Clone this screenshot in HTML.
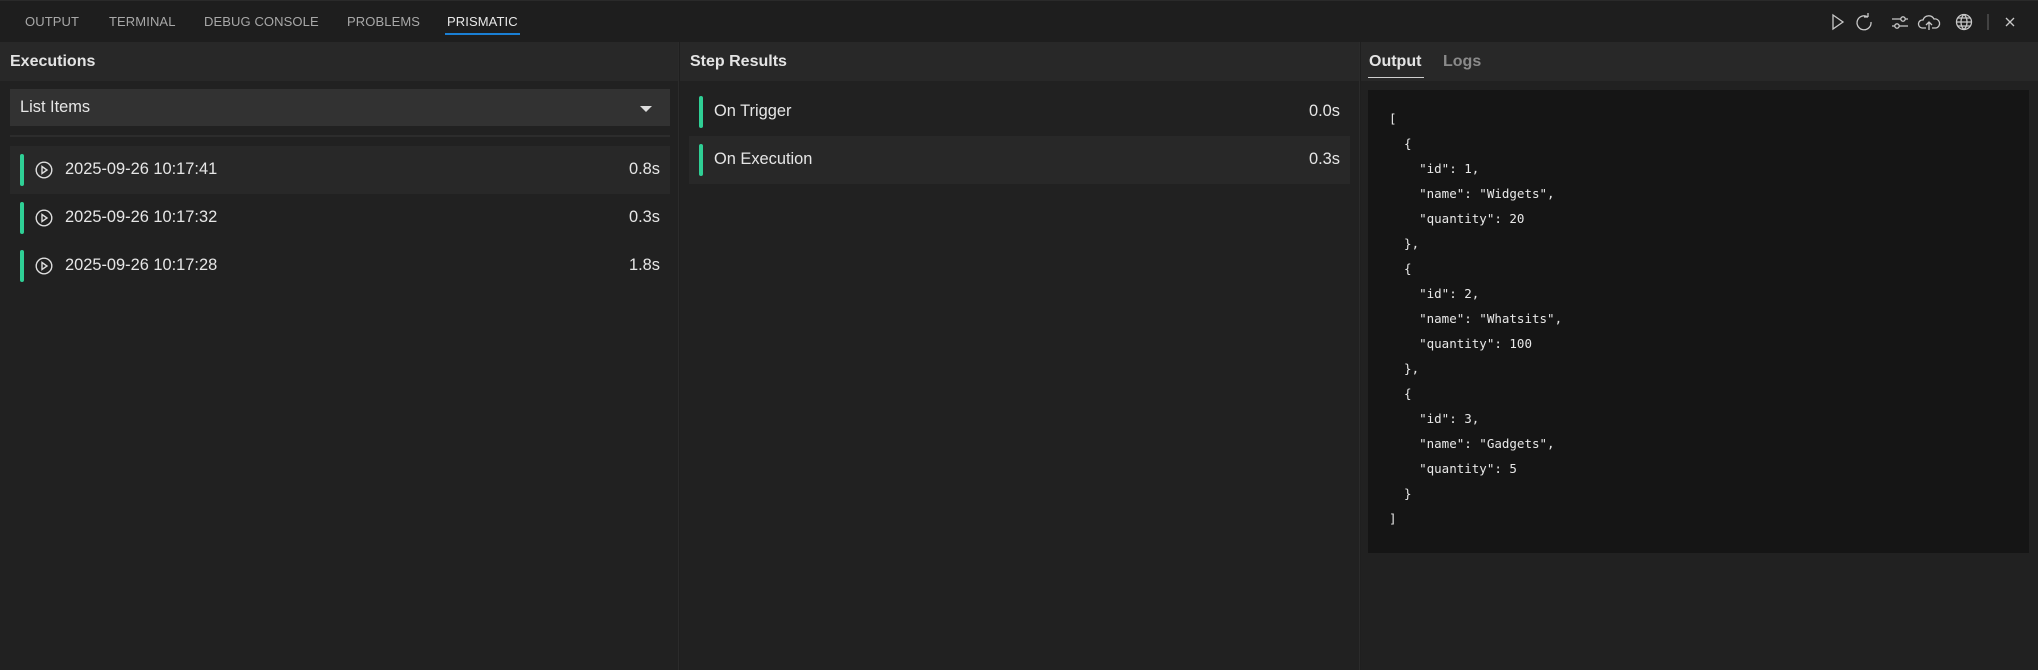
<!DOCTYPE html>
<html><head><style>
*{margin:0;padding:0;box-sizing:border-box}
body{width:2038px;height:670px;background:#1f1f1f;font-family:"Liberation Sans",sans-serif;color:#e0e0e0;position:relative;overflow:hidden}
.abs{position:absolute}
.tab{position:absolute;top:14px;font-size:13px;color:#a8a8a8;letter-spacing:0.1px}
.top{left:0;top:0;width:2038px;height:42px;background:#1e1e1e;border-top:1px solid #2a2a2a}
.panel{top:42px;bottom:0;background:#212121}
.hdr{position:absolute;left:0;right:0;top:0;height:39px;background:#282828}
.hdr b{position:absolute;top:11px;font-size:16px;color:#e4e4e4}
.row{position:absolute;height:48px}
.bar{position:absolute;width:4px;height:32px;top:8px;background:#2fcf95;border-radius:2px}
.rt{position:absolute;top:14px;font-size:16.4px;color:#e6e6e6}
.dur{position:absolute;top:14px;font-size:16.4px;color:#e6e6e6}
pre{font-family:"DejaVu Sans Mono","Liberation Mono",monospace;font-size:12.5px;line-height:25px;color:#e8e8e8}
</style></head><body>
<div class="abs top"></div>
<div class="tab" style="left:25px">OUTPUT</div>
<div class="tab" style="left:109px">TERMINAL</div>
<div class="tab" style="left:204px">DEBUG CONSOLE</div>
<div class="tab" style="left:347px">PROBLEMS</div>
<div class="tab" style="left:447px;color:#e8e8e8">PRISMATIC</div>
<div class="abs" style="left:445px;top:33px;width:75px;height:2px;background:#1a7fd4"></div>
<svg class="abs" style="left:1826px;top:9px" width="212" height="26" viewBox="0 0 212 26" fill="none" stroke="#c8c8c8" stroke-width="1.3">
<path d="M7 6 L17 13 L7 20 Z"/>
<path d="M44 8 A7 7 0 1 0 47 13 M44 8 L44 4 M44 8 L40 8" transform="translate(-2,0)"/>
<path d="M66 10 H82 M66 17 H82"/><circle cx="77" cy="10" r="2.2" fill="#1e1e1e"/><circle cx="71" cy="17" r="2.2" fill="#1e1e1e"/>
<path d="M100 19 H96 A4 4 0 0 1 97 11 A6 6 0 0 1 108 10 A4.5 4.5 0 0 1 110 19 H106 M103 21 V13 M100 16 L103 13 L106 16"/>
<circle cx="138" cy="13" r="7.5"/><path d="M130.5 13 H145.5 M132 9 H144 M132 17 H144 M138 5.5 C134 9 134 17 138 20.5 C142 17 142 9 138 5.5"/>
<path d="M162 5 V21" stroke="#555"/>
<path d="M180 9 L188 17 M188 9 L180 17"/>
</svg>

<div class="abs panel" style="left:0;width:679px;border-right:1px solid #2b2b2b">
<div class="hdr"><b style="left:10px">Executions</b></div>
<div class="abs" style="left:10px;top:47px;width:660px;height:37px;background:#323232"></div>
<div class="abs" style="left:20px;top:56px;font-size:16.4px;color:#e6e6e6">List Items</div>
<div class="abs" style="left:640px;top:64px;width:0;height:0;border-left:6px solid transparent;border-right:6px solid transparent;border-top:6px solid #ddd"></div>
<div class="abs" style="left:10px;top:93px;width:660px;height:2px;background:#2c2c2c"></div>
<div class="row" style="left:10px;top:104px;width:660px;background:#282828"></div>
<div class="row" style="left:10px;top:104px;width:660px"><div class="bar" style="left:10px"></div>
<svg class="abs" style="left:25px;top:15px" width="18" height="18" viewBox="0 0 18 18" fill="none" stroke="#ddd" stroke-width="1.4"><circle cx="9" cy="9" r="7.8"/><path d="M7 5.5 L12 9 L7 12.5 Z"/></svg>
<div class="rt" style="left:55px">2025-09-26 10:17:41</div><div class="dur" style="right:10px">0.8s</div></div>
<div class="row" style="left:10px;top:152px;width:660px"><div class="bar" style="left:10px"></div>
<svg class="abs" style="left:25px;top:15px" width="18" height="18" viewBox="0 0 18 18" fill="none" stroke="#ddd" stroke-width="1.4"><circle cx="9" cy="9" r="7.8"/><path d="M7 5.5 L12 9 L7 12.5 Z"/></svg>
<div class="rt" style="left:55px">2025-09-26 10:17:32</div><div class="dur" style="right:10px">0.3s</div></div>
<div class="row" style="left:10px;top:200px;width:660px"><div class="bar" style="left:10px"></div>
<svg class="abs" style="left:25px;top:15px" width="18" height="18" viewBox="0 0 18 18" fill="none" stroke="#ddd" stroke-width="1.4"><circle cx="9" cy="9" r="7.8"/><path d="M7 5.5 L12 9 L7 12.5 Z"/></svg>
<div class="rt" style="left:55px">2025-09-26 10:17:28</div><div class="dur" style="right:10px">1.8s</div></div>
</div>

<div class="abs panel" style="left:680px;width:680px;border-right:1px solid #2b2b2b">
<div class="hdr"><b style="left:10px">Step Results</b></div>
<div class="row" style="left:9px;top:46px;width:661px"><div class="bar" style="left:10px"></div><div class="rt" style="left:25px">On Trigger</div><div class="dur" style="right:10px">0.0s</div></div>
<div class="row" style="left:9px;top:94px;width:661px;background:#282828"><div class="bar" style="left:10px"></div><div class="rt" style="left:25px">On Execution</div><div class="dur" style="right:10px">0.3s</div></div>
</div>

<div class="abs panel" style="left:1361px;width:677px">
<div class="hdr"><b style="left:8px">Output</b><b style="left:82px;color:#8a8a8a">Logs</b></div>
<div class="abs" style="left:7px;top:35px;width:56px;height:1px;background:#cfcfcf"></div>
<div class="abs" style="left:7px;top:48px;width:661px;height:463px;background:#151515">
<pre style="position:absolute;left:21px;top:16px">[
  {
    "id": 1,
    "name": "Widgets",
    "quantity": 20
  },
  {
    "id": 2,
    "name": "Whatsits",
    "quantity": 100
  },
  {
    "id": 3,
    "name": "Gadgets",
    "quantity": 5
  }
]</pre>
</div>
</div>
</body></html>
